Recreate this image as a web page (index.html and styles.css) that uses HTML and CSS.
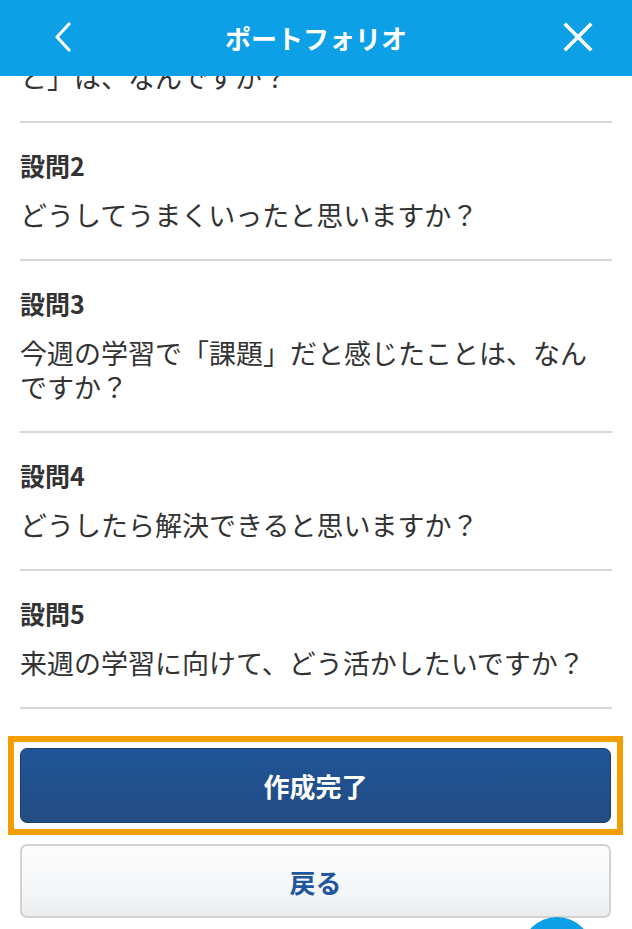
FILE: index.html
```html
<!DOCTYPE html>
<html lang="ja">
<head>
    <meta charset="UTF-8">
    <meta name="viewport" content="width=device-width, initial-scale=1.0">
    <title>ポートフォリオ</title>
    <link rel="stylesheet" href="styles.css">
</head>
<body>
    <div class="header">
        <button class="header-btn" aria-label="戻る">
            <svg width="20" height="30" viewBox="0 0 20 30">
                <polyline points="15,2 3,15 15,28" fill="none" stroke="#fff" stroke-width="3.2" stroke-linecap="round" stroke-linejoin="round"/>
            </svg>
        </button>
        <h1>ポートフォリオ</h1>
        <button class="header-btn" aria-label="閉じる">
            <svg width="30" height="30" viewBox="0 0 30 30">
                <path d="M3 3 L27 27 M27 3 L3 27" fill="none" stroke="#fff" stroke-width="3.6" stroke-linecap="square"/>
            </svg>
        </button>
    </div>

    <div class="content">
        <div class="question first">
            <p class="q-text">今週の学習で「うまくいった」「よくできたこと」は、なんですか？</p>
        </div>
        <div class="question">
            <div class="q-label">設問2</div>
            <p class="q-text">どうしてうまくいったと思いますか？</p>
        </div>
        <div class="question">
            <div class="q-label">設問3</div>
            <p class="q-text">今週の学習で「課題」だと感じたことは、なんですか？</p>
        </div>
        <div class="question">
            <div class="q-label">設問4</div>
            <p class="q-text">どうしたら解決できると思いますか？</p>
        </div>
        <div class="question">
            <div class="q-label">設問5</div>
            <p class="q-text">来週の学習に向けて、どう活かしたいですか？</p>
        </div>

        <div class="actions">
            <div class="highlight">
                <button class="btn btn-primary">作成完了</button>
            </div>
            <button class="btn btn-secondary">戻る</button>
        </div>
    </div>

    <div class="fab"></div>
</body>
</html>
```

FILE: styles.css
```css
body {
    font-family: "Noto Sans CJK JP", "Noto Sans", sans-serif;
    margin: 0;
    background-color: #fff;
    color: #333;
    overflow: hidden;
}

.header {
    position: fixed;
    top: 0;
    left: 0;
    right: 0;
    z-index: 10;
    height: 76px;
    display: flex;
    align-items: center;
    justify-content: space-between;
    padding: 0 36px 2px 46px;
    background-color: #0ea0e6;
    box-sizing: border-box;
}

.header h1 {
    margin: 0 0 0 -10px;
    color: white;
    font-size: 26px;
    font-weight: bold;
}

.header-btn {
    display: flex;
    align-items: center;
    justify-content: center;
    width: 36px;
    height: 36px;
    padding: 0;
    border: none;
    background: none;
}

.content {
    padding: 0 20px;
    margin-top: 26px;
}

.question {
    padding: 27px 0;
    border-bottom: 2px solid #d6d6d6;
}

.question.first {
    padding-top: 0;
}

.q-label {
    font-size: 25px;
    line-height: 30px;
    font-weight: bold;
    color: #333;
    margin-bottom: 18px;
}

.q-text {
    margin: 0;
    font-size: 27px;
    line-height: 34px;
    color: #333;
}

.actions {
    padding: 27px 1px 0 0;
}

.highlight {
    margin: 0 -12px;
    padding: 6px;
    border: 6px solid #f29e00;
}

.btn {
    display: block;
    width: 100%;
    height: 75px;
    font-family: inherit;
    font-size: 26px;
    font-weight: bold;
    border-radius: 7px;
    cursor: pointer;
}

.btn-primary {
    color: white;
    background: linear-gradient(#1f5598, #234c82);
    border: 1px solid #1b3e6d;
}

.btn-secondary {
    margin-top: 9px;
    height: 74px;
    color: #1e56a0;
    background: linear-gradient(#fdfdfd, #f3f5f7 70%, #e9ebed);
    border: 2px solid #d2d2d2;
}

.fab {
    position: fixed;
    left: 521px;
    top: 917px;
    width: 72px;
    height: 72px;
    border-radius: 50%;
    background-color: #0ea0e6;
}
```
